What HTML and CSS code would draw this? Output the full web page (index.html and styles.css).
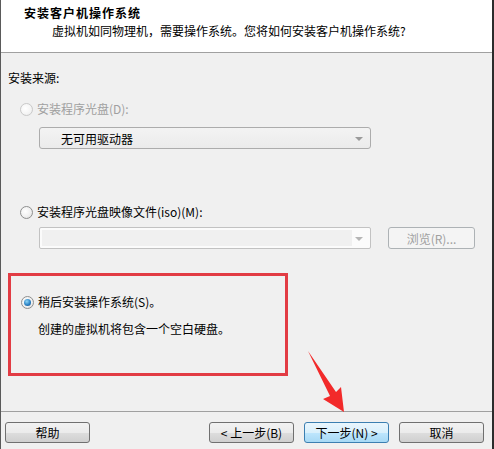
FILE: index.html
```html
<!DOCTYPE html>
<html lang="zh-CN">
<head>
<meta charset="UTF-8">
<meta name="viewport" content="width=device-width, initial-scale=1.0">
<title>安装客户机操作系统</title>
<link rel="stylesheet" href="styles.css">
</head>
<body>
<div class="wizard">
  <div class="wizard-header">
    <div class="wizard-title">安装客户机操作系统</div>
    <div class="wizard-subtitle">虚拟机如同物理机，需要操作系统。您将如何安装客户机操作系统?</div>
  </div>
  <div class="wizard-body">
    <div class="source-label">安装来源:</div>

    <div class="option option-disabled">
      <span class="radio radio-disabled"></span>
      <span class="option-text">安装程序光盘(D):</span>
    </div>
    <div class="combo">
      <span class="combo-text">无可用驱动器</span>
      <span class="combo-arrow"></span>
    </div>

    <div class="option option-iso">
      <span class="radio"></span>
      <span class="option-text">安装程序光盘映像文件(iso)(M):</span>
    </div>
    <div class="iso-row">
      <div class="combo combo-empty">
        <span class="combo-fill"></span>
        <span class="combo-arrow"></span>
      </div>
      <button type="button" class="btn btn-disabled">浏览(R)...</button>
    </div>

    <div class="highlight">
      <div class="option">
        <span class="radio radio-checked"></span>
        <span class="option-text">稍后安装操作系统(S)。</span>
      </div>
      <div class="option-desc">创建的虚拟机将包含一个空白硬盘。</div>
    </div>
  </div>
  <div class="wizard-footer">
    <button type="button" class="btn">帮助</button>
    <div class="nav-buttons">
      <button type="button" class="btn">&lt; 上一步(B)</button>
      <button type="button" class="btn btn-default">下一步(N) &gt;</button>
      <button type="button" class="btn btn-cancel">取消</button>
    </div>
  </div>
  <svg class="pointer-arrow" viewBox="0 0 50 70" width="50" height="70">
    <polygon points="8,1 36,42 41,37 44,62 23,49 30,46" fill="#f22a2a"></polygon>
  </svg>
</div>
</body>
</html>
```

FILE: styles.css
```css
body {
  margin: 0;
  padding: 0;
  font-family: "Noto Sans CJK SC", "Liberation Sans", sans-serif;
  font-size: 12px;
  color: #000;
}

.wizard {
  width: 494px;
  height: 449px;
  box-sizing: border-box;
  border-left: 1px solid #5a5a5a;
  border-right: 2px solid #2c2c2c;
  background-color: #f0f0f0;
  display: flex;
  flex-direction: column;
  position: relative;
}

.wizard-header {
  height: 53px;
  box-sizing: border-box;
  background-color: #fff;
  border-bottom: 1px solid #a0a0a0;
  padding-top: 5px;
}

.wizard-title {
  padding-left: 23px;
  font-weight: bold;
  line-height: 16px;
  letter-spacing: 1px;
}

.wizard-subtitle {
  margin-top: 2px;
  padding-left: 51px;
  line-height: 16px;
}

.wizard-body {
  flex: 1;
  padding: 0 7px;
}

.source-label {
  margin-top: 17px;
  line-height: 16px;
}

.option {
  display: flex;
  align-items: center;
  height: 16px;
  margin-top: 15px;
  padding-left: 12px;
}

.option-disabled {
  color: #a0a0a0;
}

.option-iso {
  margin-top: 55px;
}

.option-text {
  margin-left: 4px;
  line-height: 16px;
}

.radio {
  width: 11px;
  height: 11px;
  border-radius: 50%;
  border: 1px solid #8e8f8f;
  background: radial-gradient(circle at 40% 40%, #fff 0%, #f0f0f0 55%, #d6d6d6 100%);
  position: relative;
  flex-shrink: 0;
}

.radio-disabled {
  border-color: #c9c9c9;
  background: radial-gradient(circle at 40% 40%, #fff 0%, #f4f4f4 60%, #e4e4e4 100%);
}

.radio-checked::after {
  content: "";
  position: absolute;
  top: 2px;
  left: 2px;
  width: 7px;
  height: 7px;
  border-radius: 50%;
  background: radial-gradient(circle at 40% 35%, #8fd6f7 0%, #2b83c6 55%, #18467b 100%);
}

.combo {
  margin-top: 10px;
  margin-left: 31px;
  width: 332px;
  height: 22px;
  box-sizing: border-box;
  border: 1px solid #acacac;
  border-radius: 3px;
  background: linear-gradient(#f3f3f3, #ebebeb);
  display: flex;
  align-items: center;
  position: relative;
}

.combo-text {
  padding-left: 21px;
}

.combo-arrow {
  position: absolute;
  right: 7px;
  top: 9px;
  width: 0;
  height: 0;
  border-left: 4px solid transparent;
  border-right: 4px solid transparent;
  border-top: 4px solid #9a9a9a;
}

.iso-row {
  display: flex;
  margin-top: 7px;
}

.combo-empty {
  margin-top: 0;
  border-color: #c2c2c2;
  border-radius: 2px;
  background: #fbfbfb;
  padding: 2px;
}

.combo-fill {
  width: 310px;
  height: 16px;
  background-color: #f0f0f0;
}

.combo-empty .combo-arrow {
  border-top-color: #b5b5b5;
}

.btn {
  width: 85px;
  height: 21px;
  box-sizing: border-box;
  padding: 0;
  font-family: inherit;
  font-size: 12px;
  line-height: 19px;
  color: #000;
  border: 1px solid #707070;
  border-radius: 3px;
  background: linear-gradient(#f2f2f2 0%, #ebebeb 50%, #dddddd 51%, #cfcfcf 100%);
}

.btn-disabled {
  margin-left: 17px;
  width: 87px;
  height: 22px;
  color: #a0a0a0;
  border-color: #adb2b5;
  background: #f4f4f4;
}

.highlight {
  margin-top: 24px;
  margin-left: 0;
  width: 280px;
  height: 103px;
  box-sizing: border-box;
  border: 3px solid #e23c44;
  padding-top: 18px;
}

.highlight .option {
  margin-top: 0;
  padding-left: 10px;
}

.option-desc {
  margin-top: 11px;
  padding-left: 27px;
  line-height: 16px;
}

.wizard-footer {
  height: 38px;
  box-sizing: border-box;
  border-top: 1px solid #a0a0a0;
  padding: 10px 8px 0 4px;
  display: flex;
  justify-content: space-between;
}

.nav-buttons {
  display: flex;
}

.btn-default {
  margin-left: 10px;
  border-color: #3c7fb1;
  background: linear-gradient(#eaf6fd 0%, #d9f0fc 50%, #bee6fd 51%, #a7d9f5 100%);
}

.btn-cancel {
  margin-left: 10px;
}

.pointer-arrow {
  position: absolute;
  left: 299px;
  top: 350px;
}
```
